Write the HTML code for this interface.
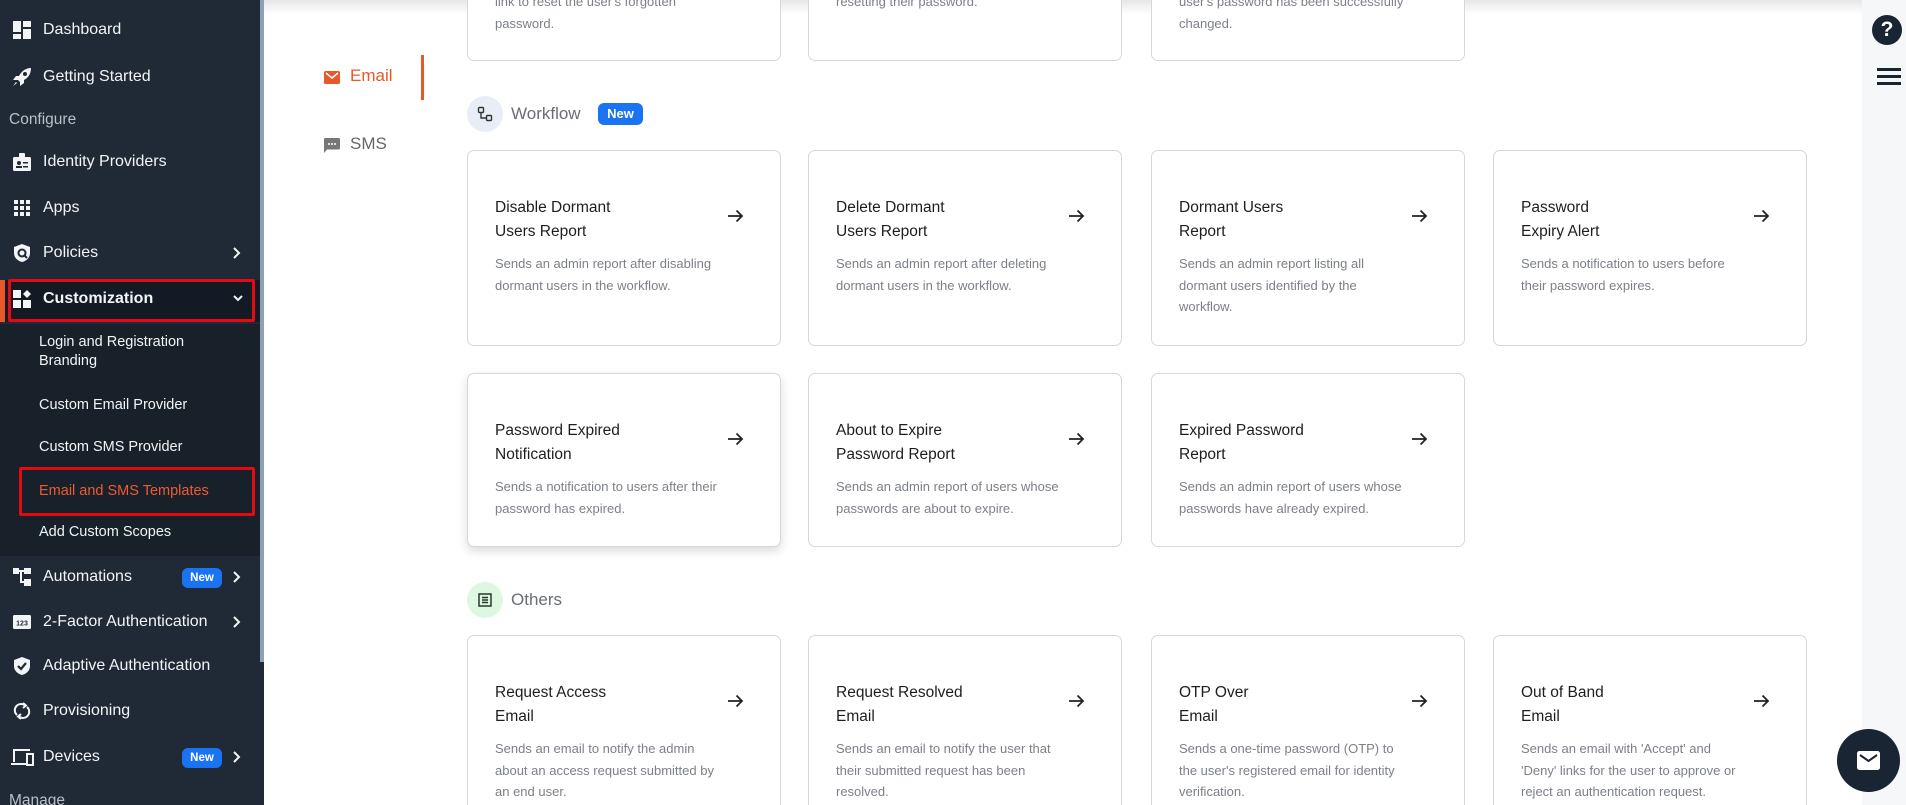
<!DOCTYPE html>
<html style="width:1906px;height:805px;overflow:hidden"><head><meta charset="utf-8"><style>
*{box-sizing:border-box;margin:0;padding:0}
body{width:1906px;height:805px;overflow:hidden;background:#fff;font-family:"Liberation Sans",sans-serif;position:relative}
#wrap{position:absolute;left:0;top:0;width:1906px;height:805px;overflow:hidden}
.sb{position:absolute;left:0;top:0;width:264px;height:805px;background:#1f2a36}
.sub{position:absolute;left:0;top:324px;width:260px;height:232px;background:#18202a}
.cust{position:absolute;left:0;top:280px;width:260px;height:42px;background:#131a23}
.orbar{position:absolute;left:0;top:280px;width:5px;height:42px;background:#e8582a}
.track{position:absolute;left:260px;top:0;width:4px;height:662px;background:#8ea0b5}
.it{position:absolute;left:43px;color:#f2f4f6;font-size:16px;line-height:20px;white-space:nowrap}
.si{position:absolute;left:39px;color:#f2f4f6;font-size:14.5px;line-height:20px}
.ic{position:absolute;left:12px;width:20px;height:20px}
.chev{position:absolute;left:232px;width:10px;height:14px}
.new{position:absolute;left:182px;width:40px;height:20px;border-radius:6px;background:#1a73f0;color:#fff;font-size:11.5px;font-weight:bold;text-align:center;line-height:20px}
.redbox{position:absolute;border:3px solid #e50914;border-radius:2px}
.card{position:absolute;width:314px;border:1px solid #d8d8d8;border-radius:7px;background:#fff}
.card .t{position:absolute;left:27px;top:45px;font-size:15.5px;line-height:24px;color:#1e1e1e;width:200px}
.card .d{position:absolute;left:27px;top:102px;font-size:13px;line-height:21.5px;color:#7c8087;width:265px}
.card .a{position:absolute;left:259px;top:58px;width:17px;height:14px}
.hd{position:absolute;font-size:17px;color:#6a6e75}
.circ{position:absolute;width:36px;height:36px;border-radius:50%}
</style></head><body><div id="wrap">
<div class="sb"></div>
<div class="sub"></div>
<div class="cust"></div>
<div class="orbar"></div>
<div class="track"></div>

<svg class="ic" style="top:20px" viewBox="0 0 20 20" fill="#f2f4f6"><rect x="1" y="1" width="8" height="11"/><rect x="11" y="1" width="8" height="6"/><rect x="1" y="14" width="8" height="5"/><rect x="11" y="9" width="8" height="10"/></svg>
<div class="it" style="top:20px">Dashboard</div>
<svg class="ic" style="top:67px" viewBox="0 0 20 20" fill="#f2f4f6"><path d="M19 1C13 1 9 5 7 9L4 9 1 13 6 13 8 15 8 19 12 16 12 13C16 11 19 7 19 1Z"/><circle cx="13" cy="7" r="2" fill="#1f2a36"/><path d="M4 15 1 19 5 16Z"/></svg>
<div class="it" style="top:67px">Getting Started</div>
<div class="it" style="top:110px;left:9px;color:#b8c0c8;font-size:15.5px">Configure</div>
<svg class="ic" style="top:152px" viewBox="0 0 20 20" fill="#f2f4f6"><rect x="1" y="5" width="18" height="14" rx="1.5"/><rect x="7" y="1" width="6" height="6" rx="1"/><circle cx="7" cy="11" r="2" fill="#1f2a36"/><rect x="4" y="14" width="6" height="2" fill="#1f2a36"/><rect x="11" y="10" width="5" height="1.5" fill="#1f2a36"/><rect x="11" y="14" width="5" height="1.5" fill="#1f2a36"/></svg>
<div class="it" style="top:152px">Identity Providers</div>
<svg class="ic" style="top:198px" viewBox="0 0 20 20" fill="#f2f4f6"><rect x="2" y="2" width="4" height="4"/><rect x="8" y="2" width="4" height="4"/><rect x="14" y="2" width="4" height="4"/><rect x="2" y="8" width="4" height="4"/><rect x="8" y="8" width="4" height="4"/><rect x="14" y="8" width="4" height="4"/><rect x="2" y="14" width="4" height="4"/><rect x="8" y="14" width="4" height="4"/><rect x="14" y="14" width="4" height="4"/></svg>
<div class="it" style="top:198px">Apps</div>
<svg class="ic" style="top:243px" viewBox="0 0 20 20" fill="#f2f4f6"><path d="M10 1 18 4V10C18 15 14 18 10 19 6 18 2 15 2 10V4Z"/><circle cx="10" cy="10" r="3.5" fill="none" stroke="#1f2a36" stroke-width="2"/><path d="M12 12 15 15" stroke="#1f2a36" stroke-width="2"/></svg>
<div class="it" style="top:243px">Policies</div>
<svg class="chev" style="top:246px" viewBox="0 0 10 14"><path d="M2 2 7 7 2 12" fill="none" stroke="#f2f4f6" stroke-width="2"/></svg>
<svg class="ic" style="top:289px" viewBox="0 0 20 20" fill="#f2f4f6"><rect x="1" y="1" width="8" height="8"/><rect x="1" y="11" width="8" height="8"/><rect x="11" y="11" width="8" height="8"/><path d="M15 1 19 5 15 9 11 5Z"/></svg>
<div class="it" style="top:289px;font-weight:bold">Customization</div>
<svg class="chev" style="top:294px;width:12px;height:10px" viewBox="0 0 12 10"><path d="M2 2 6 6 10 2" fill="none" stroke="#f2f4f6" stroke-width="2"/></svg>
<div class="redbox" style="left:8px;top:279px;width:247px;height:43px"></div>

<div class="si" style="top:333px;line-height:19px">Login and Registration<br>Branding</div>
<div class="si" style="top:395px">Custom Email Provider</div>
<div class="si" style="top:437px">Custom SMS Provider</div>
<div class="si" style="top:481px;color:#ef5a32">Email and SMS Templates</div>
<div class="redbox" style="left:19px;top:467px;width:236px;height:49px"></div>
<div class="si" style="top:522px">Add Custom Scopes</div>

<svg class="ic" style="top:567px" viewBox="0 0 20 20" fill="#f2f4f6"><rect x="1" y="1" width="6" height="6"/><rect x="12" y="1" width="7" height="6"/><rect x="12" y="12" width="7" height="7"/><rect x="7" y="3" width="5" height="2"/><rect x="8" y="3" width="2" height="13"/><rect x="8" y="14" width="4" height="2"/></svg>
<div class="it" style="top:567px">Automations</div>
<div class="new" style="top:568px">New</div>
<svg class="chev" style="top:570px" viewBox="0 0 10 14"><path d="M2 2 7 7 2 12" fill="none" stroke="#f2f4f6" stroke-width="2"/></svg>
<svg class="ic" style="top:612px" viewBox="0 0 20 20"><rect x="1" y="3" width="18" height="14" rx="1.5" fill="#f2f4f6"/><text x="10" y="13.5" font-size="7" text-anchor="middle" fill="#1f2a36" font-family="Liberation Sans" font-weight="bold">123</text></svg>
<div class="it" style="top:612px">2-Factor Authentication</div>
<svg class="chev" style="top:615px" viewBox="0 0 10 14"><path d="M2 2 7 7 2 12" fill="none" stroke="#f2f4f6" stroke-width="2"/></svg>
<svg class="ic" style="top:656px" viewBox="0 0 20 20"><path d="M10 1 18 4V10C18 15 14 18 10 19 6 18 2 15 2 10V4Z" fill="#f2f4f6"/><path d="M6 10 9 13 14 7" fill="none" stroke="#1f2a36" stroke-width="2.2"/></svg>
<div class="it" style="top:656px">Adaptive Authentication</div>
<svg class="ic" style="top:701px" viewBox="0 0 20 20" fill="none" stroke="#f2f4f6" stroke-width="2"><path d="M5 14A6 6 0 0 1 13 4.5"/><path d="M15 6A6 6 0 0 1 7 15.5"/><path d="M11 2 14 4.5 11 7" /><path d="M9 13 6 15.5 9 18"/></svg>
<div class="it" style="top:701px">Provisioning</div>
<svg class="ic" style="top:747px;left:11px;width:23px" viewBox="0 0 23 20" fill="none" stroke="#f2f4f6" stroke-width="2"><path d="M3 15V3H19"/><path d="M0 17H15"/><rect x="16" y="7" width="6" height="11"/></svg>
<div class="it" style="top:747px">Devices</div>
<div class="new" style="top:748px">New</div>
<svg class="chev" style="top:750px" viewBox="0 0 10 14"><path d="M2 2 7 7 2 12" fill="none" stroke="#f2f4f6" stroke-width="2"/></svg>
<div class="it" style="top:791px;left:9px;color:#b8c0c8;font-size:15.5px">Manage</div>

<div style="position:absolute;left:264px;top:0;width:1598px;height:14px;background:linear-gradient(#e6e6e6,rgba(255,255,255,0))"></div>

<svg style="position:absolute;left:324px;top:71px" width="16" height="13" viewBox="0 0 16 13"><rect width="16" height="13" rx="1.5" fill="#e8582a"/><path d="M2 2 8 7 14 2" fill="none" stroke="#fff" stroke-width="1.6"/></svg>
<div style="position:absolute;left:350px;top:66px;font-size:17px;color:#e8582a">Email</div>
<div style="position:absolute;left:421px;top:55px;width:3px;height:45px;background:#e8582a"></div>
<svg style="position:absolute;left:324px;top:138px" width="16" height="15" viewBox="0 0 16 15"><path d="M0 1.5Q0 0 1.5 0H14.5Q16 0 16 1.5V10Q16 11.5 14.5 11.5H3L0 15Z" fill="#777"/><circle cx="5" cy="6" r="1" fill="#fff"/><circle cx="8" cy="6" r="1" fill="#fff"/><circle cx="11" cy="6" r="1" fill="#fff"/></svg>
<div style="position:absolute;left:350px;top:134px;font-size:17px;color:#666">SMS</div>

<div class="card" style="left:467px;top:-40px;height:101px"><div class="d" style="top:30px">link to reset the user's forgotten<br>password.</div></div>
<div class="card" style="left:808px;top:-40px;height:101px"><div class="d" style="top:30px">resetting their password.</div></div>
<div class="card" style="left:1151px;top:-40px;height:101px"><div class="d" style="top:30px">user's password has been successfully<br>changed.</div></div>

<div class="circ" style="left:467px;top:96px;background:#e8edf8"></div>
<svg style="position:absolute;left:477px;top:106px" width="16" height="16" viewBox="0 0 16 16" fill="none" stroke="#333" stroke-width="1.4"><rect x="1.5" y="1.5" width="5" height="5" rx="1"/><rect x="9.5" y="9.5" width="5" height="5" rx="1"/><path d="M4 6.5V12H9.5"/></svg>
<div class="hd" style="left:511px;top:104px">Workflow</div>
<div class="new" style="left:598px;top:103px;width:45px;height:22px;line-height:22px;font-size:13px">New</div>

<svg width="0" height="0" style="position:absolute"><defs><symbol id="ar" viewBox="0 0 17 14"><path d="M1 7H15M9.5 1.5 15 7 9.5 12.5" fill="none" stroke="#222" stroke-width="1.8"/></symbol></defs></svg>

<div class="card" style="left:467px;top:150px;height:196px"><div class="t">Disable Dormant<br>Users Report</div><svg class="a"><use href="#ar"/></svg><div class="d">Sends an admin report after disabling<br>dormant users in the workflow.</div></div>
<div class="card" style="left:808px;top:150px;height:196px"><div class="t">Delete Dormant<br>Users Report</div><svg class="a"><use href="#ar"/></svg><div class="d">Sends an admin report after deleting<br>dormant users in the workflow.</div></div>
<div class="card" style="left:1151px;top:150px;height:196px"><div class="t">Dormant Users<br>Report</div><svg class="a"><use href="#ar"/></svg><div class="d">Sends an admin report listing all<br>dormant users identified by the<br>workflow.</div></div>
<div class="card" style="left:1493px;top:150px;height:196px"><div class="t">Password<br>Expiry Alert</div><svg class="a"><use href="#ar"/></svg><div class="d">Sends a notification to users before<br>their password expires.</div></div>

<div class="card" style="left:467px;top:373px;height:174px;box-shadow:0 4px 10px rgba(0,0,0,0.15)"><div class="t">Password Expired<br>Notification</div><svg class="a"><use href="#ar"/></svg><div class="d">Sends a notification to users after their<br>password has expired.</div></div>
<div class="card" style="left:808px;top:373px;height:174px"><div class="t">About to Expire<br>Password Report</div><svg class="a"><use href="#ar"/></svg><div class="d">Sends an admin report of users whose<br>passwords are about to expire.</div></div>
<div class="card" style="left:1151px;top:373px;height:174px"><div class="t">Expired Password<br>Report</div><svg class="a"><use href="#ar"/></svg><div class="d">Sends an admin report of users whose<br>passwords have already expired.</div></div>

<div class="circ" style="left:467px;top:582px;background:#ddf7e0"></div>
<svg style="position:absolute;left:478px;top:593px" width="14" height="14" viewBox="0 0 14 14" fill="none" stroke="#2b3a30" stroke-width="1.5"><rect x="1" y="1" width="12" height="12"/><path d="M4 4.5H10M4 7H10M4 9.5H10"/></svg>
<div class="hd" style="left:511px;top:590px">Others</div>

<div class="card" style="left:467px;top:635px;height:190px"><div class="t">Request Access<br>Email</div><svg class="a"><use href="#ar"/></svg><div class="d">Sends an email to notify the admin<br>about an access request submitted by<br>an end user.</div></div>
<div class="card" style="left:808px;top:635px;height:190px"><div class="t">Request Resolved<br>Email</div><svg class="a"><use href="#ar"/></svg><div class="d">Sends an email to notify the user that<br>their submitted request has been<br>resolved.</div></div>
<div class="card" style="left:1151px;top:635px;height:190px"><div class="t">OTP Over<br>Email</div><svg class="a"><use href="#ar"/></svg><div class="d">Sends a one-time password (OTP) to<br>the user's registered email for identity<br>verification.</div></div>
<div class="card" style="left:1493px;top:635px;height:190px"><div class="t">Out of Band<br>Email</div><svg class="a"><use href="#ar"/></svg><div class="d">Sends an email with 'Accept' and<br>'Deny' links for the user to approve or<br>reject an authentication request.</div></div>

<div style="position:absolute;left:1862px;top:0;width:44px;height:805px;background:#f5f7f9"></div>
<div style="position:absolute;left:1872px;top:15px;width:30px;height:30px;border-radius:50%;background:#1a2533;color:#fff;font-weight:bold;font-size:21px;text-align:center;line-height:30px">?</div>
<div style="position:absolute;left:1877px;top:68px;width:24px;height:2.5px;background:#1a2533"></div>
<div style="position:absolute;left:1877px;top:75px;width:24px;height:2.5px;background:#1a2533"></div>
<div style="position:absolute;left:1877px;top:82px;width:24px;height:2.5px;background:#1a2533"></div>
<div style="position:absolute;left:1837px;top:729px;width:63px;height:63px;border-radius:50%;background:#1a2533"></div>
<svg style="position:absolute;left:1857px;top:751px" width="23" height="19" viewBox="0 0 23 19"><rect width="23" height="19" rx="2.5" fill="#fff"/><path d="M3 4 11.5 10 20 4" fill="none" stroke="#1a2533" stroke-width="2"/></svg>
</div></body></html>
